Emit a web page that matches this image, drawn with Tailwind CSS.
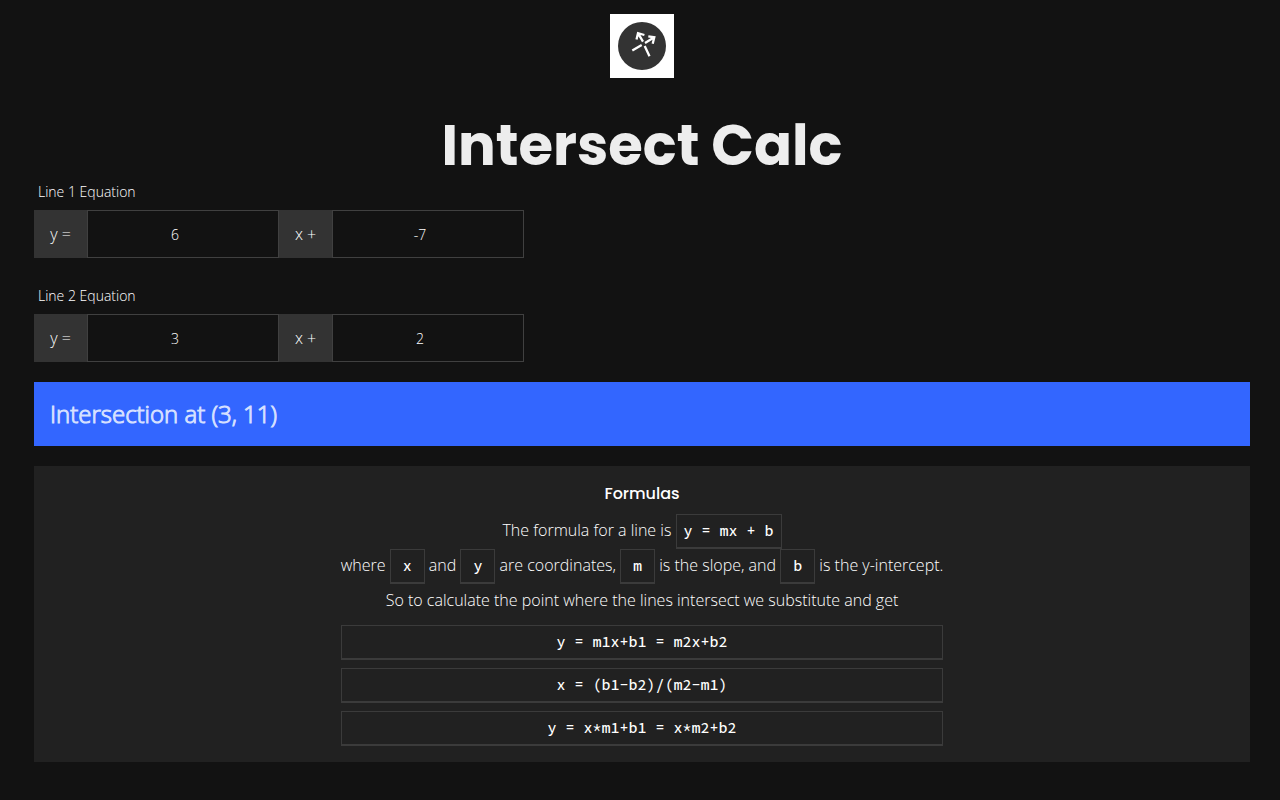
<!DOCTYPE html>
<html lang="en">
<head>
<meta charset="utf-8">
<meta name="viewport" content="width=device-width, initial-scale=1">
<title>Intersect Calc</title>
<script src="https://cdn.jsdelivr.net/npm/@tailwindcss/browser@4"></script>
</head>
<body class="min-h-screen bg-[#121212] pt-3.5 pr-[30px] pb-9 pl-[34px] font-['Open_Sans',sans-serif] font-light text-white">
<header class="flex flex-col items-center">
  <svg class="size-16" viewBox="0 0 64 64" role="img" aria-label="Intersect Calc logo">
    <rect width="64" height="64" fill="#fff"/>
    <circle cx="32" cy="32" r="24" fill="#333"/>
    <g fill="none" stroke="#fff" stroke-width="2.3">
      <path d="M22.3 36.5 31.7 31M35 29l8.5-5.2M38.3 22.4l6 .9-1.6 6.4"/>
      <path d="M39.5 42.2 34.7 32M33 27.6l-4.6-7.8M26.5 25.6l1.5-6.4 6.4 1.8"/>
    </g>
  </svg>
  <h1 class="mt-8 font-['Poppins','Inter',sans-serif] text-[56px] leading-[72px] font-bold text-[#ededed]">Intersect Calc</h1>
</header>
<main>
  <form>
    <fieldset>
      <legend class="px-1 text-sm leading-5">Line 1 Equation</legend>
      <div class="mt-2 flex h-12 w-full max-w-[490px]">
        <label for="m1" class="flex w-[53px] shrink-0 items-center justify-center bg-[#333]">y =</label>
        <input id="m1" value="6" class="min-w-0 flex-1 border border-[#404040] pt-0.5 pr-4 text-center text-sm">
        <label for="b1" class="flex w-[53px] shrink-0 items-center justify-center bg-[#333]">x +</label>
        <input id="b1" value="-7" class="min-w-0 flex-1 border border-[#404040] pt-0.5 pr-4 text-center text-sm">
      </div>
    </fieldset>
    <fieldset class="mt-7">
      <legend class="px-1 text-sm leading-5">Line 2 Equation</legend>
      <div class="mt-2 flex h-12 w-full max-w-[490px]">
        <label for="m2" class="flex w-[53px] shrink-0 items-center justify-center bg-[#333]">y =</label>
        <input id="m2" value="3" class="min-w-0 flex-1 border border-[#404040] pt-0.5 pr-4 text-center text-sm">
        <label for="b2" class="flex w-[53px] shrink-0 items-center justify-center bg-[#333]">x +</label>
        <input id="b2" value="2" class="min-w-0 flex-1 border border-[#404040] pt-0.5 pr-4 text-center text-sm">
      </div>
    </fieldset>
  </form>
  <output class="mt-5 block bg-[#3366ff] p-4 text-2xl leading-8 text-[#d6e0ff] [-webkit-text-stroke:1px_#d6e0ff]">Intersection at (3, 11)</output>
  <section class="mt-5 flex flex-col items-center bg-[#212121] p-4">
    <h2 class="font-['Poppins','Inter',sans-serif] text-base leading-6 font-medium">Formulas</h2>
    <div class="mt-[7px]">
      <p class="text-center leading-[35px]">The formula for a line is <code class="border border-b-2 border-[#3b3b3b] px-[7px] pt-1.5 pb-[7px] font-['Source_Code_Pro','Liberation_Mono',monospace] text-[15px] font-medium">y = mx + b</code><br>
      where <code class="border border-b-2 border-[#3b3b3b] px-3 pt-1.5 pb-[7px] font-['Source_Code_Pro','Liberation_Mono',monospace] text-[15px] font-medium">x</code> and <code class="border border-b-2 border-[#3b3b3b] px-3 pt-1.5 pb-[7px] font-['Source_Code_Pro','Liberation_Mono',monospace] text-[15px] font-medium">y</code> are coordinates, <code class="border border-b-2 border-[#3b3b3b] px-3 pt-1.5 pb-[7px] font-['Source_Code_Pro','Liberation_Mono',monospace] text-[15px] font-medium">m</code> is the slope, and <code class="border border-b-2 border-[#3b3b3b] px-3 pt-1.5 pb-[7px] font-['Source_Code_Pro','Liberation_Mono',monospace] text-[15px] font-medium">b</code> is the y-intercept.<br>
      So to calculate the point where the lines intersect we substitute and get</p>
      <div class="mt-[7px] flex flex-col gap-2 text-center font-['Source_Code_Pro','Liberation_Mono',monospace] text-[15px] leading-8 font-medium">
        <code class="border border-b-2 border-[#3b3b3b] [font-family:inherit]">y = m1x+b1 = m2x+b2</code>
        <code class="border border-b-2 border-[#3b3b3b] [font-family:inherit]">x = (b1-b2)/(m2-m1)</code>
        <code class="border border-b-2 border-[#3b3b3b] [font-family:inherit]">y = x*m1+b1 = x*m2+b2</code>
      </div>
    </div>
  </section>
</main>
</body>
</html>
